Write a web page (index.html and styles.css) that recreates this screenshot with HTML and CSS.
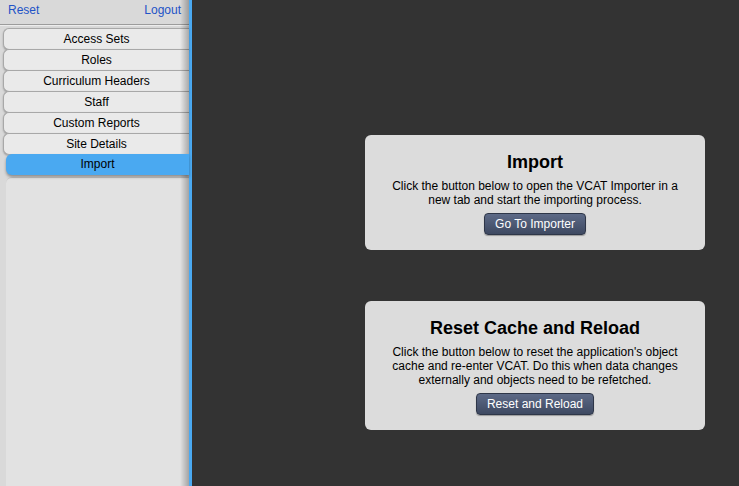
FILE: index.html
```html
<!DOCTYPE html>
<html lang="en">
<head>
  <meta charset="UTF-8" />
  <meta name="viewport" content="width=device-width, initial-scale=1.0" />
  <title>VCAT Admin</title>
  <link rel="stylesheet" href="styles.css">
</head>
<body>
  <aside class="sidebar">
    <div class="sidebar-top">
      <a href="#">Reset</a>
      <a href="#">Logout</a>
    </div>
    <nav class="menu">
      <a class="menu-item" href="#">Access Sets</a>
      <a class="menu-item" href="#">Roles</a>
      <a class="menu-item" href="#">Curriculum Headers</a>
      <a class="menu-item" href="#">Staff</a>
      <a class="menu-item" href="#">Custom Reports</a>
      <a class="menu-item" href="#">Site Details</a>
      <a class="menu-item active" href="#">Import</a>
    </nav>
    <div class="menu-rest"></div>
  </aside>

  <main>
    <section class="panel">
      <h2>Import</h2>
      <p>Click the button below to open the VCAT Importer in a new tab and start the importing process.</p>
      <button>Go To Importer</button>
    </section>

    <section class="panel">
      <h2>Reset Cache and Reload</h2>
      <p>Click the button below to reset the application's object cache and re-enter VCAT. Do this when data changes externally and objects need to be refetched.</p>
      <button>Reset and Reload</button>
    </section>
  </main>
</body>
</html>
```

FILE: styles.css
```css
html, body {
  height: 100%;
}

body {
  margin: 0;
  display: flex;
  font-family: 'Liberation Sans', Arial, sans-serif;
  font-size: 12px;
  background-color: #333333;
  color: #000;
}

.sidebar {
  position: relative;
  width: 189px;
  flex-shrink: 0;
  display: flex;
  flex-direction: column;
  background-color: #d9d9d9;
  border-right: 3px solid #4aa9f1;
}

.sidebar::after {
  content: '';
  position: absolute;
  top: 0;
  right: 0;
  bottom: 0;
  width: 9px;
  background: linear-gradient(to right, rgba(0, 0, 0, 0), rgba(0, 0, 0, 0.28));
  pointer-events: none;
}

.sidebar-top {
  display: flex;
  justify-content: space-between;
  align-items: center;
  height: 20px;
  padding: 0 8px 4px 8px;
  border-bottom: 1px solid #9c9c9c;
  box-shadow: 0 1px 0 #ececec;
}

.sidebar-top a {
  color: #2253c7;
  text-decoration: none;
}

.menu {
  display: flex;
  flex-direction: column;
  margin-top: 3px;
}

.menu-item {
  display: block;
  height: 20px;
  line-height: 20px;
  margin: 0 0 -1px 3px;
  border: 1px solid #a8a8a8;
  border-right: none;
  border-radius: 6px 0 0 6px;
  background-color: #eaeaea;
  box-shadow: 0 1px 2px rgba(0, 0, 0, 0.25);
  text-align: center;
  color: #000;
  text-decoration: none;
}

.menu-item.active {
  position: relative;
  z-index: 2;
  height: 21px;
  line-height: 21px;
  margin: 0 0 0 6px;
  border: none;
  background-color: #4aa9f1;
  box-shadow: 0 2px 3px rgba(0, 0, 0, 0.35);
}

.menu-rest {
  flex: 1;
  margin: 2px 0 0 6px;
  border-top: 1px solid #c4c4c4;
  border-radius: 6px 0 0 0;
  background-color: #e2e2e2;
}

main {
  flex: 1;
  padding: 135px 0 0 173px;
  display: flex;
  flex-direction: column;
  gap: 51px;
}

.panel {
  width: 300px;
  padding: 16px 20px 15px;
  background-color: #dcdcdc;
  border-radius: 6px;
  text-align: center;
}

.panel h2 {
  margin: 0 0 6px;
  font-size: 18px;
  line-height: 22px;
}

.panel p {
  margin: 0 0 6px;
  line-height: 14px;
}

.panel button {
  height: 22px;
  padding: 0 10px;
  font-family: inherit;
  font-size: 12px;
  color: white;
  background: linear-gradient(#5d6a87, #3e4961);
  border: 1px solid #2e3648;
  border-radius: 4px;
  box-shadow: 0 1px 1px rgba(0, 0, 0, 0.3);
  cursor: pointer;
}
```
